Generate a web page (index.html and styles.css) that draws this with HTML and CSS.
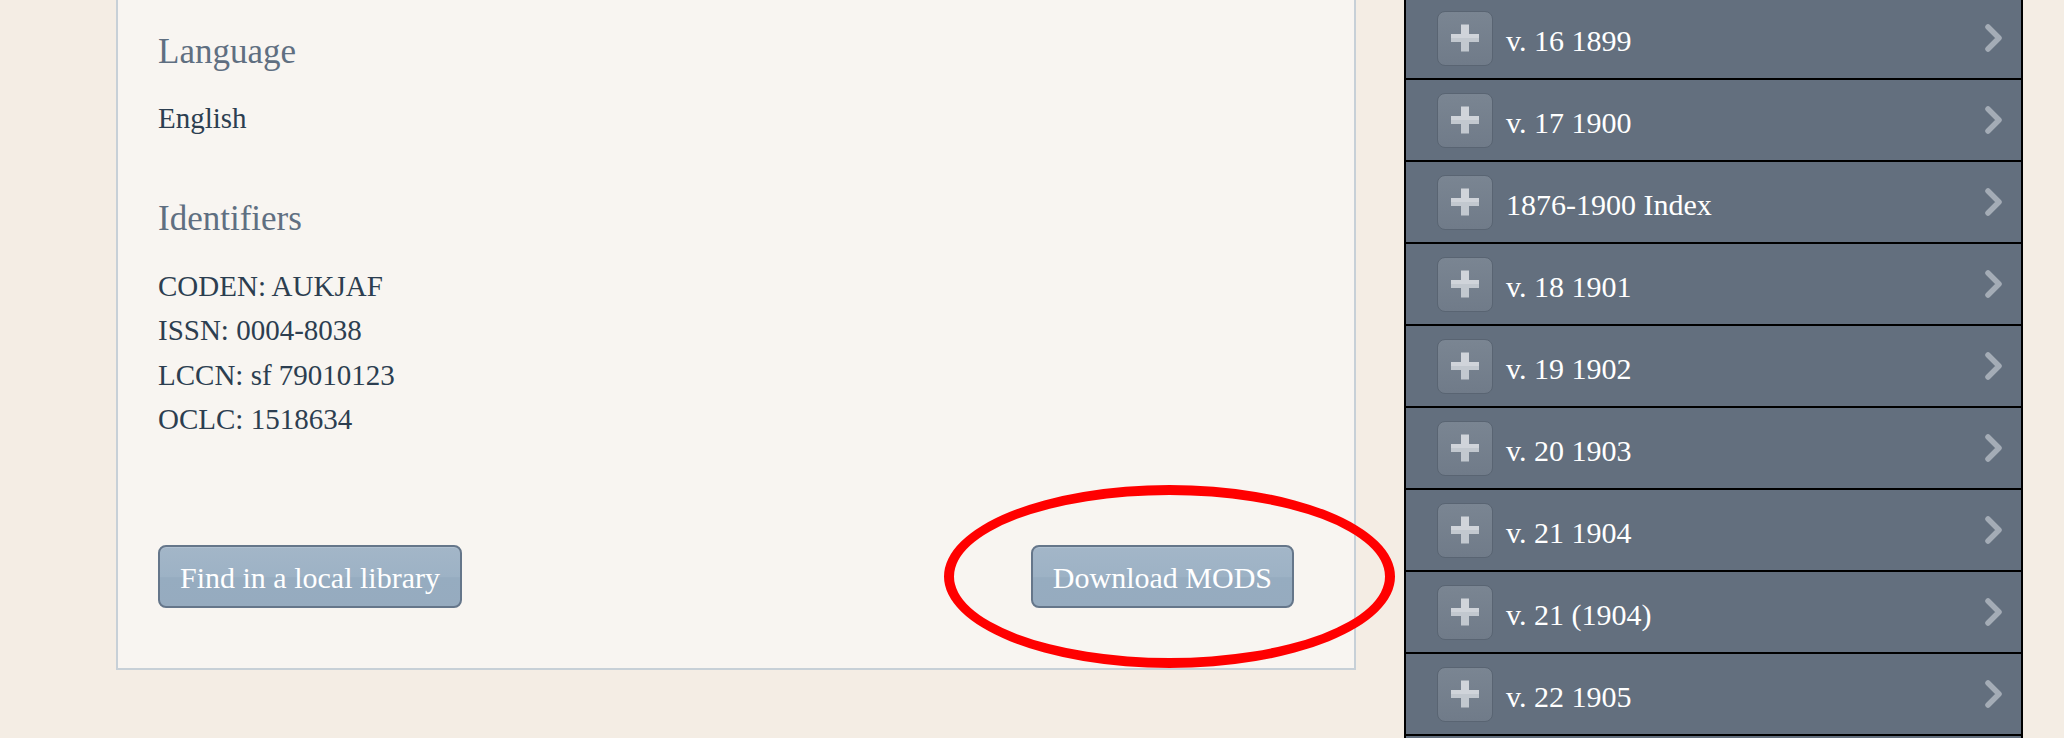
FILE: index.html
```html
<!DOCTYPE html>
<html lang="en">
<head>
    <meta charset="UTF-8">
    <meta name="viewport" content="width=device-width, initial-scale=1.0">
    <title>The Auk - Record</title>
    <link rel="stylesheet" href="styles.css">
</head>
<body>
    <div class="page">
        <main class="record">
            <section class="field">
                <h3>Language</h3>
                <p>English</p>
            </section>
            <section class="field">
                <h3>Identifiers</h3>
                <ul class="identifiers">
                    <li>CODEN: AUKJAF</li>
                    <li>ISSN: 0004-8038</li>
                    <li>LCCN: sf 79010123</li>
                    <li>OCLC: 1518634</li>
                </ul>
            </section>
            <div class="actions">
                <a href="#" class="btn">Find in a local library</a>
                <a href="#" class="btn">Download MODS</a>
                <span class="highlight"></span>
            </div>
        </main>

        <aside class="volumes">
            <ul>
                <li class="volume"><span class="plus"></span><span class="label">v. 16 1899</span><svg class="chevron" viewBox="0 0 18 28"><polyline points="3,3 14,14 3,25"/></svg></li>
                <li class="volume"><span class="plus"></span><span class="label">v. 17 1900</span><svg class="chevron" viewBox="0 0 18 28"><polyline points="3,3 14,14 3,25"/></svg></li>
                <li class="volume"><span class="plus"></span><span class="label">1876-1900 Index</span><svg class="chevron" viewBox="0 0 18 28"><polyline points="3,3 14,14 3,25"/></svg></li>
                <li class="volume"><span class="plus"></span><span class="label">v. 18 1901</span><svg class="chevron" viewBox="0 0 18 28"><polyline points="3,3 14,14 3,25"/></svg></li>
                <li class="volume"><span class="plus"></span><span class="label">v. 19 1902</span><svg class="chevron" viewBox="0 0 18 28"><polyline points="3,3 14,14 3,25"/></svg></li>
                <li class="volume"><span class="plus"></span><span class="label">v. 20 1903</span><svg class="chevron" viewBox="0 0 18 28"><polyline points="3,3 14,14 3,25"/></svg></li>
                <li class="volume"><span class="plus"></span><span class="label">v. 21 1904</span><svg class="chevron" viewBox="0 0 18 28"><polyline points="3,3 14,14 3,25"/></svg></li>
                <li class="volume"><span class="plus"></span><span class="label">v. 21 (1904)</span><svg class="chevron" viewBox="0 0 18 28"><polyline points="3,3 14,14 3,25"/></svg></li>
                <li class="volume"><span class="plus"></span><span class="label">v. 22 1905</span><svg class="chevron" viewBox="0 0 18 28"><polyline points="3,3 14,14 3,25"/></svg></li>
                <li class="volume volume-more"></li>
            </ul>
        </aside>
    </div>
</body>
</html>
```

FILE: styles.css
```css
/* Base */
body {
  margin: 0;
  background-color: #f4ede4;
  font-family: "Liberation Serif", "Times New Roman", serif;
  color: #2c3e50;
  overflow: hidden;
}

.page {
  display: flex;
  align-items: flex-start;
  margin-top: -4px;
  padding-left: 116px;
}

/* Record panel */
.record {
  width: 1136px;
  padding: 34px 60px 60px 40px;
  background-color: #f8f5f1;
  border: 2px solid #c7d0d7;
}

.field {
  margin-bottom: 59px;
}

.field:last-of-type {
  margin-bottom: 0;
}

.field h3 {
  margin: 0 0 24px 0;
  font-size: 35px;
  font-weight: normal;
  line-height: 40px;
  color: #5f6f81;
}

.field:last-of-type h3 {
  margin-bottom: 25px;
}

.field p {
  margin: 0;
  font-size: 29px;
  line-height: 44px;
}

.identifiers {
  list-style: none;
  margin: 0;
  padding: 0;
  font-size: 29px;
  line-height: 44.3px;
}

.actions {
  position: relative;
  display: flex;
  justify-content: space-between;
  margin-top: 104px;
}

.btn {
  display: inline-block;
  padding: 3px 20px 0 20px;
  line-height: 56px;
  font-size: 30px;
  color: #fff;
  text-decoration: none;
  background: linear-gradient(#a3b6c8 0%, #9db2c5 50%, #96acc0 52%, #96abbf 100%);
  border: 2px solid #65768a;
  border-radius: 8px;
  box-shadow: inset 0 1px 0 rgba(255, 255, 255, 0.15);
}

/* red annotation circle round the MODS button */
.highlight {
  position: absolute;
  left: 786px;
  top: -60px;
  width: 431px;
  height: 163px;
  border: 10px solid #ff0000;
  border-radius: 50%;
  pointer-events: none;
}

/* Volume list */
.volumes {
  width: 615px;
  margin-left: 48px;
  background-color: #636f7e;
  border: 2px solid #000;
}

.volumes ul {
  list-style: none;
  margin: 0;
  padding: 0;
}

.volume {
  display: flex;
  align-items: center;
  height: 80px;
  padding: 0 18px 0 31px;
  border-bottom: 2px solid #000;
}

.plus {
  position: relative;
  flex: none;
  width: 54px;
  height: 53px;
  margin-right: 13px;
  background: linear-gradient(#7a8592, #707b89);
  border: 1px solid #596472;
  border-radius: 8px;
}

.plus::before,
.plus::after {
  content: '';
  position: absolute;
  left: 50%;
  top: 50%;
  background: linear-gradient(#d0d4da 50%, #c2c8cf 50%);
  transform: translate(-50%, -50%);
}

.plus::before {
  width: 28px;
  height: 8px;
}

.plus::after {
  width: 8px;
  height: 27px;
}

.label {
  flex: 1;
  padding-top: 6px;
  font-size: 30px;
  line-height: 30px;
  color: #fff;
}

.chevron {
  flex: none;
  width: 18px;
  height: 28px;
}

.chevron polyline {
  fill: none;
  stroke: #a4acb6;
  stroke-width: 5.5;
  stroke-linecap: round;
  stroke-linejoin: round;
}
```
